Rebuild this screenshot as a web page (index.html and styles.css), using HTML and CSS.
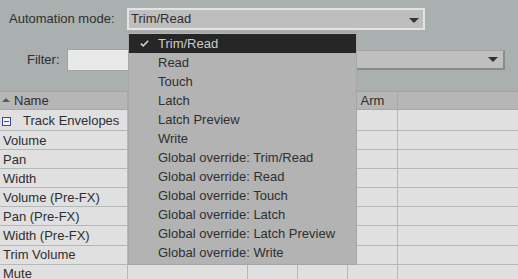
FILE: index.html
```html
<!DOCTYPE html>
<html>
<head>
<meta charset="utf-8">
<link rel="stylesheet" href="styles.css">
</head>
<body>
<div class="app">
  <div class="mode-row">
    <span class="label mode-label">Automation mode:</span>
    <div class="combo">
      <span class="combo-text">Trim/Read</span>
      <span class="arrow"></span>
    </div>
  </div>
  <div class="filter-row">
    <span class="label filter-label">Filter:</span>
    <div class="filter-input"></div>
    <div class="filter-combo"><span class="arrow"></span></div>
  </div>
  <div class="table">
    <div class="row head">
      <div class="cell name"><span class="sort"></span>Name</div>
      <div class="cell"></div>
      <div class="cell"></div>
      <div class="cell"></div>
      <div class="cell center">Arm</div>
      <div class="cell last"></div>
    </div>
    <div class="row first">
      <div class="cell name group"><span class="collapse"><span class="minus"></span></span>Track Envelopes</div>
      <div class="cell"></div><div class="cell"></div><div class="cell"></div><div class="cell"></div><div class="cell last"></div>
    </div>
    <div class="row">
      <div class="cell name">Volume</div>
      <div class="cell"></div><div class="cell"></div><div class="cell"></div><div class="cell"></div><div class="cell last"></div>
    </div>
    <div class="row">
      <div class="cell name">Pan</div>
      <div class="cell"></div><div class="cell"></div><div class="cell"></div><div class="cell"></div><div class="cell last"></div>
    </div>
    <div class="row">
      <div class="cell name">Width</div>
      <div class="cell"></div><div class="cell"></div><div class="cell"></div><div class="cell"></div><div class="cell last"></div>
    </div>
    <div class="row">
      <div class="cell name">Volume (Pre-FX)</div>
      <div class="cell"></div><div class="cell"></div><div class="cell"></div><div class="cell"></div><div class="cell last"></div>
    </div>
    <div class="row">
      <div class="cell name">Pan (Pre-FX)</div>
      <div class="cell"></div><div class="cell"></div><div class="cell"></div><div class="cell"></div><div class="cell last"></div>
    </div>
    <div class="row">
      <div class="cell name">Width (Pre-FX)</div>
      <div class="cell"></div><div class="cell"></div><div class="cell"></div><div class="cell"></div><div class="cell last"></div>
    </div>
    <div class="row">
      <div class="cell name">Trim Volume</div>
      <div class="cell"></div><div class="cell"></div><div class="cell"></div><div class="cell"></div><div class="cell last"></div>
    </div>
    <div class="row">
      <div class="cell name">Mute</div>
      <div class="cell"></div><div class="cell"></div><div class="cell"></div><div class="cell"></div><div class="cell last"></div>
    </div>
  </div>

  <div class="menu">
    <div class="item selected"><svg class="check" width="9" height="7" viewBox="0 0 9 7"><path d="M0.8 3.6 L3.2 5.8 L8.2 0.8" fill="none" stroke="#d0d0d0" stroke-width="1.6"/></svg>Trim/Read</div>
    <div class="item">Read</div>
    <div class="item">Touch</div>
    <div class="item">Latch</div>
    <div class="item">Latch Preview</div>
    <div class="item">Write</div>
    <div class="item">Global override: Trim/Read</div>
    <div class="item">Global override: Read</div>
    <div class="item">Global override: Touch</div>
    <div class="item">Global override: Latch</div>
    <div class="item">Global override: Latch Preview</div>
    <div class="item">Global override: Write</div>
  </div>
</div>
</body>
</html>
```

FILE: styles.css
```css
html, body {
  margin: 0;
  padding: 0;
}
body {
  width: 518px;
  height: 279px;
  overflow: hidden;
  background: #a9b0af;
  font-family: "Liberation Sans", Arial, sans-serif;
  font-size: 13px;
  color: #2f2f2f;
}
.app {
  position: relative;
  width: 518px;
  height: 279px;
  overflow: hidden;
}
.label {
  color: #2f2f2f;
  line-height: 16px;
}
.mode-row {
  display: flex;
  align-items: center;
  height: 22px;
  padding-top: 8px;
}
.mode-label {
  margin-left: 9px;
  width: 118px;
}
.combo {
  position: relative;
  box-sizing: border-box;
  width: 298px;
  height: 22px;
  border: 2px solid #e2e3e2;
  background: #bebebe;
  display: flex;
  align-items: center;
}
.combo-text {
  padding-left: 2px;
  line-height: 16px;
}
.arrow {
  position: absolute;
  right: 4px;
  top: 8px;
  width: 0;
  height: 0;
  border-left: 5px solid transparent;
  border-right: 5px solid transparent;
  border-top: 5px solid #333;
}
.filter-row {
  display: flex;
  align-items: center;
  margin-top: 19px;
  height: 22px;
}
.filter-label {
  margin-left: 27px;
  width: 40px;
}
.filter-input {
  box-sizing: border-box;
  width: 133px;
  height: 22px;
  background: #e9e9e9;
  border: 1px solid #9fa5a4;
}
.filter-combo {
  position: relative;
  box-sizing: border-box;
  width: 305px;
  height: 20px;
  background: #bfbfbf;
  border-top: 1px solid #a3a3a3;
  border-right: 2px solid #8b8b8b;
  border-bottom: 2px solid #8b8b8b;
}
.filter-combo .arrow {
  right: 5px;
  top: 6px;
}
.table {
  margin-top: 20px;
  border-top: 1px solid #9ea4a3;
}
.row {
  display: grid;
  grid-template-columns: 128px 120px 50px 50px 50px 1fr;
  box-sizing: border-box;
  height: 19.1px;
  background: #dfe0df;
  border-bottom: 1px solid #b2bab8;
}
.row.head {
  height: 18px;
  background: #b6b6b6;
  border-bottom: 1px solid #a4aaa9;
}
.row.first {
  height: 21px;
}
.cell {
  box-sizing: border-box;
  border-right: 1px solid #b2bab8;
  padding-left: 3px;
  padding-top: 1px;
  line-height: 18px;
  white-space: nowrap;
  overflow: hidden;
}
.head .cell {
  border-right-color: #a4aaa9;
  line-height: 17px;
  padding-top: 0;
}
.cell.center {
  text-align: center;
  padding-left: 0;
}
.cell.last {
  border-right: none;
}
.name {
  display: flex;
  align-items: center;
}
.head .name {
  padding-left: 2px;
}
.sort {
  width: 0;
  height: 0;
  border-left: 4px solid transparent;
  border-right: 4px solid transparent;
  border-bottom: 4px solid #5a5a5a;
  margin-right: 4px;
  margin-top: -1px;
}
.group {
  padding-left: 2px;
}
.collapse {
  position: relative;
  box-sizing: border-box;
  width: 9px;
  height: 9px;
  border: 1px solid #3a48b0;
  background: #f2f2f6;
  margin-right: 12px;
  margin-top: 1px;
}
.minus {
  position: absolute;
  left: 1px;
  top: 3px;
  width: 5px;
  height: 1px;
  background: #3a48b0;
}
.menu {
  position: absolute;
  left: 128px;
  top: 31px;
  box-sizing: border-box;
  width: 229px;
  height: 234px;
  background: #b3b3b3;
  border: 1px solid #a6a6a6;
  border-top: 2px solid #a9a9a9;
  padding-top: 1px;
}
.item {
  position: relative;
  height: 19px;
  line-height: 19px;
  padding-left: 29px;
  color: #2f2f2f;
  white-space: nowrap;
}
.item.selected {
  background: #262626;
  color: #cbcbcb;
}
.check {
  position: absolute;
  left: 11px;
  top: 6px;
}
```
